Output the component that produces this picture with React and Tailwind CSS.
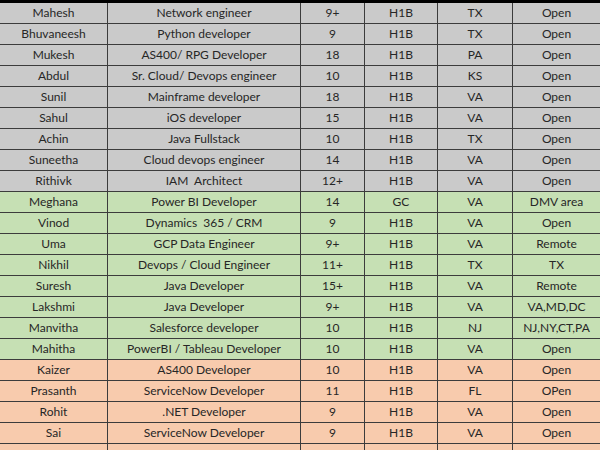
import React from "react";

const rows = [
  ["Mahesh", "Network engineer", "9+", "H1B", "TX", "Open", "g"],
  ["Bhuvaneesh", "Python developer", "9", "H1B", "TX", "Open", "g"],
  ["Mukesh", "AS400/ RPG Developer", "18", "H1B", "PA", "Open", "g"],
  ["Abdul", "Sr. Cloud/ Devops engineer", "10", "H1B", "KS", "Open", "g"],
  ["Sunil", "Mainframe developer", "18", "H1B", "VA", "Open", "g"],
  ["Sahul", "iOS developer", "15", "H1B", "VA", "Open", "g"],
  ["Achin", "Java Fullstack", "10", "H1B", "TX", "Open", "g"],
  ["Suneetha", "Cloud devops engineer", "14", "H1B", "VA", "Open", "g"],
  ["Rithivk", "IAM  Architect", "12+", "H1B", "VA", "Open", "g"],
  ["Meghana", "Power BI Developer", "14", "GC", "VA", "DMV area", "n"],
  ["Vinod", "Dynamics  365 / CRM", "9", "H1B", "VA", "Open", "n"],
  ["Uma", "GCP Data Engineer", "9+", "H1B", "VA", "Remote", "n"],
  ["Nikhil", "Devops / Cloud Engineer", "11+", "H1B", "TX", "TX", "n"],
  ["Suresh", "Java Developer", "15+", "H1B", "VA", "Remote", "n"],
  ["Lakshmi", "Java Developer", "9+", "H1B", "VA", "VA,MD,DC", "n"],
  ["Manvitha", "Salesforce developer", "10", "H1B", "NJ", "NJ,NY,CT,PA", "n"],
  ["Mahitha", "PowerBI / Tableau Developer", "10", "H1B", "VA", "Open", "n"],
  ["Kaizer", "AS400 Developer", "10", "H1B", "VA", "Open", "o"],
  ["Prasanth", "ServiceNow Developer", "11", "H1B", "FL", "OPen", "o"],
  ["Rohit", ".NET Developer", "9", "H1B", "VA", "Open", "o"],
  ["Sai", "ServiceNow Developer", "9", "H1B", "VA", "Open", "o"],
  ["", "", "", "", "", "", "o"],
];

const bg = { g: "bg-[#cacaca]", n: "bg-[#c6e0b4]", o: "bg-[#f8cbad]" };

export default function App() {
  return (
    <div
      className="w-[600px] h-[450px] overflow-hidden bg-white text-[#262626] text-[12px]"
      style={{ fontFamily: "Lato, 'Open Sans', sans-serif" }}
    >
      <div className="h-[3px] bg-black" />
      {rows.map((r, i) => (
        <div
          key={i}
          className={`grid grid-cols-[108px_193px_64px_73px_75px_1fr] h-[21px] border-b border-[#3c3c3c] ${bg[r[6]]}`}
        >
          {r.slice(0, 6).map((c, j) => (
            <div
              key={j}
              className={`flex items-center justify-center whitespace-pre leading-none ${j < 5 ? "border-r border-[#3c3c3c]" : ""}`}
            >
              {c}
            </div>
          ))}
        </div>
      ))}
    </div>
  );
}
